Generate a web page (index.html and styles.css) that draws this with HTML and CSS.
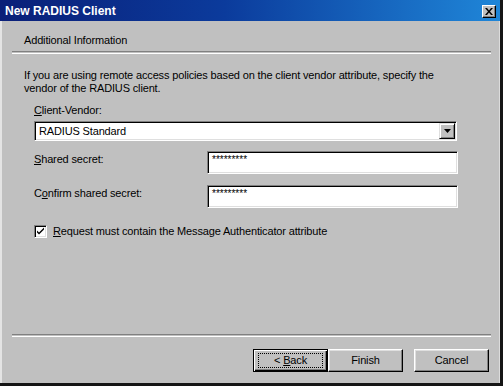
FILE: index.html
```html
<!DOCTYPE html>
<html>
<head>
<meta charset="utf-8">
<link rel="stylesheet" href="styles.css">
</head>
<body>
<div class="window">
  <div class="titlebar">
    <span class="title">New RADIUS Client</span>
    <span class="close">
      <svg width="8" height="7" viewBox="0 0 8 7"><path d="M0 0h2l2 2.5L6 0h2L5 3.5 8 7H6L4 4.5 2 7H0l3-3.5z" fill="#000"/></svg>
    </span>
  </div>
  <div class="body">
    <div class="header">Additional Information</div>
    <div class="sep"></div>
    <div class="content">
      <p class="intro">If you are using remote access policies based on the client vendor attribute, specify the vendor of the RADIUS client.</p>
      <div class="label"><u>C</u>lient-Vendor:</div>
      <div class="combo">
        <span class="combo-text">RADIUS Standard</span>
        <span class="drop">
          <svg width="7" height="4" viewBox="0 0 7 4"><path d="M0 0h7L3.5 4z" fill="#000"/></svg>
        </span>
      </div>
      <div class="row first">
        <div class="row-label"><u>S</u>hared secret:</div>
        <div class="field"><span class="stars">*********</span></div>
      </div>
      <div class="row second">
        <div class="row-label">C<u>o</u>nfirm shared secret:</div>
        <div class="field"><span class="stars">*********</span></div>
      </div>
      <div class="check-row">
        <span class="checkbox">
          <svg width="9" height="9" viewBox="0 0 9 9"><path d="M1 3.5l2 2 5-5v2l-5 5-2-2z" fill="#000"/></svg>
        </span>
        <span class="check-label"><u>R</u>equest must contain the Message Authenticator attribute</span>
      </div>
    </div>
    <div class="sep"></div>
    <div class="buttons">
      <span class="btn default"><span class="focus"><span>&lt;&nbsp;<u>B</u>ack</span></span></span>
      <span class="btn">Finish</span>
      <span class="btn cancel">Cancel</span>
    </div>
  </div>
</div>
</body>
</html>
```
FILE: styles.css
```css
html, body {
  margin: 0;
  padding: 0;
  background: #c0c0c0;
}
body {
  width: 503px;
  height: 386px;
  overflow: hidden;
  font-family: "Liberation Sans", Arial, sans-serif;
  font-size: 11px;
  letter-spacing: -0.15px;
  color: #000;
}
.window {
  width: 503px;
  height: 386px;
  box-sizing: border-box;
  border-right: 3px solid #151515;
  border-bottom: 3px solid #151515;
  display: flex;
  flex-direction: column;
  background: #c0c0c0;
}
.titlebar {
  height: 21px;
  flex: none;
  display: flex;
  align-items: center;
  justify-content: space-between;
  background: linear-gradient(to right, #0a1f78 0%, #0b3b9c 45%, #1f86d8 100%);
  padding: 0 4px 0 5px;
  box-sizing: border-box;
}
.title {
  color: #fff;
  font-weight: bold;
  font-size: 12px;
  letter-spacing: 0;
  padding-top: 1px;
}
.close {
  width: 14px;
  height: 13px;
  box-sizing: border-box;
  background: #c0c0c0;
  border: 1px solid;
  border-color: #fff #000 #000 #fff;
  box-shadow: inset -1px -1px #808080;
  display: flex;
  align-items: center;
  justify-content: center;
  margin-top: 1px;
}
.close svg { display: block; }
.body {
  flex: 1;
  display: flex;
  flex-direction: column;
  border-left: 2px solid #e4e4e4;
  border-right: 1px solid #dcdcdc;
}
.header {
  line-height: 13px;
  padding: 13px 0 0 22px;
  height: 17px;
}
.sep {
  height: 1px;
  border-top: 1px solid #808080;
  border-bottom: 1px solid #fff;
  margin: 0 8px 0 10px;
}
.content {
  flex: 1;
  padding: 15px 0 0 22px;
  box-sizing: border-box;
}
.intro {
  margin: 0;
  line-height: 13px;
  width: 434px;
}
.label {
  margin-top: 9px;
  line-height: 13px;
  padding-left: 10px;
}
.combo {
  margin: 4px 0 0 10px;
  width: 423px;
  height: 20px;
  box-sizing: border-box;
  background: #fff;
  border: 1px solid;
  border-color: #808080 #fff #fff #808080;
  box-shadow: inset 1px 1px #000, inset -1px -1px #dfdfdf;
  display: flex;
  align-items: center;
  justify-content: space-between;
  padding: 1px 1px 1px 4px;
}
.combo-text {
  line-height: 16px;
}
.drop {
  width: 16px;
  height: 16px;
  box-sizing: border-box;
  background: #c0c0c0;
  border: 1px solid;
  border-color: #dfdfdf #000 #000 #dfdfdf;
  box-shadow: inset 1px 1px #fff, inset -1px -1px #808080;
  display: flex;
  align-items: center;
  justify-content: center;
}
.drop svg { display: block; }
.row {
  display: flex;
  align-items: flex-start;
  padding-left: 10px;
}
.row.first { margin-top: 10px; }
.row.second { margin-top: 11px; }
.row-label {
  width: 173px;
  line-height: 16px;
}
.field {
  width: 251px;
  height: 23px;
  box-sizing: border-box;
  background: #fff;
  border: 1px solid;
  border-color: #808080 #fff #fff #808080;
  box-shadow: inset 1px 1px #000, inset -1px -1px #dfdfdf;
  padding: 2px 0 0 4px;
}
.stars {
  display: block;
  font-size: 10px;
  line-height: 11px;
  letter-spacing: 0;
}
.check-row {
  margin-top: 17px;
  padding-left: 10px;
  display: flex;
  align-items: flex-start;
}
.checkbox {
  width: 13px;
  height: 13px;
  box-sizing: border-box;
  background: #fff;
  border: 1px solid;
  border-color: #808080 #fff #fff #808080;
  box-shadow: inset 1px 1px #000, inset -1px -1px #dfdfdf;
  display: flex;
  align-items: center;
  justify-content: center;
  flex: none;
}
.checkbox svg { display: block; }
.check-label {
  margin-left: 6px;
  line-height: 13px;
}
.buttons {
  height: 46px;
  flex: none;
  display: flex;
  justify-content: flex-end;
  align-items: flex-start;
  padding: 12px 10px 0 0;
  box-sizing: border-box;
}
.btn {
  width: 75px;
  height: 23px;
  box-sizing: border-box;
  border: 1px solid;
  border-color: #fff #000 #000 #fff;
  box-shadow: inset -1px -1px #808080, inset 1px 1px #dfdfdf;
  display: flex;
  align-items: center;
  justify-content: center;
  line-height: 13px;
}
.btn.default {
  border: 1px solid #000;
  box-shadow: inset 1px 1px #fff, inset -1px -1px #000, inset -2px -2px #808080;
}
.btn.cancel {
  margin-left: 11px;
}
.focus {
  width: 65px;
  height: 15px;
  box-sizing: border-box;
  border: 1px dotted #000;
  display: flex;
  align-items: center;
  justify-content: center;
}
```
